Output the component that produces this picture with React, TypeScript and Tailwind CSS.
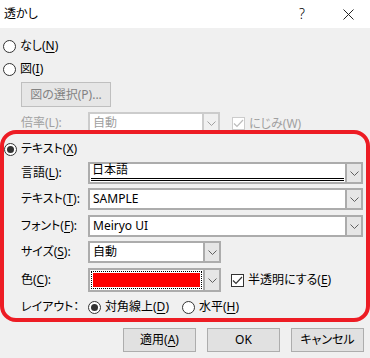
const Chevron = ({ color = "#606060" }: { color?: string }) => (
  <svg width="9" height="5" viewBox="0 0 9 5">
    <path d="M0.5 0.5 L4.5 4.5 L8.5 0.5" fill="none" stroke={color} strokeWidth="1" />
  </svg>
)

const Radio = ({ on, disabled }: { on?: boolean; disabled?: boolean }) => (
  <div className={`w-[13px] h-[13px] shrink-0 rounded-full border bg-white flex items-center justify-center ${disabled ? "border-[#bcbcbc]" : "border-[#333333]"}`}>
    {on && <div className="w-[7px] h-[7px] rounded-full bg-[#333333]" />}
  </div>
)

const Check = ({ disabled }: { disabled?: boolean }) => (
  <div className={`w-[13px] h-[13px] shrink-0 border bg-white flex items-center justify-center ${disabled ? "border-[#cccccc]" : "border-[#333333]"}`}>
    <svg width="11" height="9" viewBox="0 0 11 9">
      <path d="M1 4.5 L4 7.5 L10 1" fill="none" stroke={disabled ? "#bcbcbc" : "#333333"} strokeWidth="1.2" />
    </svg>
  </div>
)

const Drop = ({ disabled }: { disabled?: boolean }) => (
  <div className={`w-[16px] shrink-0 flex items-center justify-center border-l-2 ${disabled ? "bg-[#f0f0f0] border-[#cccccc]" : "bg-[#e6e6e6] border-[#acacac]"}`}>
    <Chevron color={disabled ? "#a0a0a0" : "#606060"} />
  </div>
)

const Label = ({ children }: { children: React.ReactNode }) => (
  <div className="w-[67px] shrink-0 flex items-center">{children}</div>
)

const U = ({ children }: { children: React.ReactNode }) => <span className="underline underline-offset-2">{children}</span>

const App = () => {
  return (
    <div className="w-[370px] h-[358px] bg-[#f0f0f0] text-[12px] leading-none text-black overflow-hidden [font-family:'Noto_Sans','Noto_Sans_CJK_JP',sans-serif] [font-feature-settings:'palt']">
      {/* title bar */}
      <div className="h-[28px] bg-white flex items-center pl-[4px]">
        <span className="text-[12px]">透かし</span>
        <span className="ml-auto mr-[38px] text-[14px] font-light">?</span>
        <svg width="11" height="11" viewBox="0 0 11 11" className="mr-[16px]">
          <path d="M0.5 0.5 L10.5 10.5 M10.5 0.5 L0.5 10.5" stroke="#222" strokeWidth="1" />
        </svg>
      </div>

      {/* なし / 図 */}
      <div className="flex items-center gap-[4px] h-[18px] mt-[9px] pl-[3px]">
        <Radio />
        <span>なし(<U>N</U>)</span>
      </div>
      <div className="flex items-center gap-[4px] h-[18px] mt-[5px] pl-[3px]">
        <Radio />
        <span>図(<U>I</U>)</span>
      </div>
      <div className="pl-[21px] mt-[4px]">
        <div className="w-[90px] h-[25px] flex items-center justify-center bg-[#e6e6e6] border border-[#bfbfbf] text-[#838383]">
          図の選択(P)...
        </div>
      </div>
      <div className="flex h-[18px] mt-[5px] pl-[21px] overflow-hidden items-start">
        <div className="w-[67px] h-[22px] flex items-center text-[#a0a0a0]">倍率(L):</div>
        <div className="w-[132px] h-[22px] shrink-0 flex bg-white border-2 border-[#cccccc]">
          <div className="flex-1 flex items-center px-[3px] text-[#a0a0a0]">自動</div>
          <Drop disabled />
        </div>
        <div className="ml-[12px] mt-[5px] flex items-center gap-[4px] text-[#a0a0a0]">
          <Check disabled />
          <span>にじみ(W)</span>
        </div>
      </div>

      {/* テキスト section */}
      <div className="h-[192px] border-4 border-[#ed1c24] rounded-[16px] flex flex-col">
        <div className="flex items-center gap-[4px] h-[18px] mt-[6px] pl-[0px]">
          <Radio on />
          <span>テキスト(<U>X</U>)</span>
        </div>

        <div className="flex mt-[4px] pl-[17px] pr-[3px] h-[22px]">
          <Label>言語(<U>L</U>):</Label>
          <div className="flex-1 flex bg-white border-2 border-[#acacac]">
            <div className="flex-1 flex flex-col justify-end px-[1px] pb-[1px]">
              <div className="border-b-[3px] border-double border-black pb-[2px] pl-[1px]">日本語</div>
            </div>
            <Drop />
          </div>
        </div>

        <div className="flex mt-[4px] pl-[17px] pr-[3px] h-[22px]">
          <Label>テキスト(<U>T</U>):</Label>
          <div className="flex-1 flex bg-white border-2 border-[#acacac]">
            <div className="flex-1 flex items-center px-[3px]">SAMPLE</div>
            <Drop />
          </div>
        </div>

        <div className="flex mt-[5px] pl-[17px] pr-[3px] h-[22px]">
          <Label>フォント(<U>F</U>):</Label>
          <div className="flex-1 flex bg-white border-2 border-[#acacac]">
            <div className="flex-1 flex items-center px-[3px]">Meiryo UI</div>
            <Drop />
          </div>
        </div>

        <div className="flex mt-[4px] pl-[17px] pr-[3px] h-[22px]">
          <Label>サイズ(<U>S</U>):</Label>
          <div className="w-[133px] flex bg-white border-2 border-[#acacac]">
            <div className="flex-1 flex items-center px-[3px]">自動</div>
            <Drop />
          </div>
        </div>

        <div className="flex mt-[5px] pl-[17px] pr-[3px] h-[24px] items-center">
          <Label>色(<U>C</U>):</Label>
          <div className="w-[133px] h-[24px] flex bg-white border-2 border-[#acacac]">
            <div className="flex-1 p-[1px]">
              <div className="h-full border border-dotted border-black p-[1px]">
                <div className="h-full bg-[#ff0000]" />
              </div>
            </div>
            <Drop />
          </div>
          <div className="ml-[10px] flex items-center gap-[4px]">
            <Check />
            <span>半透明にする(<U>E</U>)</span>
          </div>
        </div>

        <div className="flex mt-[6px] pl-[17px] h-[18px] items-center">
          <Label>レイアウト：</Label>
          <div className="flex items-center gap-[4px]">
            <Radio on />
            <span>対角線上(<U>D</U>)</span>
          </div>
          <div className="flex items-center gap-[4px] ml-[13px]">
            <Radio />
            <span>水平(<U>H</U>)</span>
          </div>
        </div>
      </div>

      {/* buttons */}
      <div className="flex justify-end gap-[11px] pr-[6px] mt-[6px]">
        <div className="w-[73px] h-[24px] flex items-center justify-center bg-[#e1e1e1] border border-[#adadad]">適用(<U>A</U>)</div>
        <div className="w-[73px] h-[24px] flex items-center justify-center bg-[#e1e1e1] border border-[#adadad]">OK</div>
        <div className="w-[73px] h-[24px] flex items-center justify-center bg-[#e1e1e1] border border-[#adadad]">キャンセル</div>
      </div>
    </div>
  )
}

export default App
